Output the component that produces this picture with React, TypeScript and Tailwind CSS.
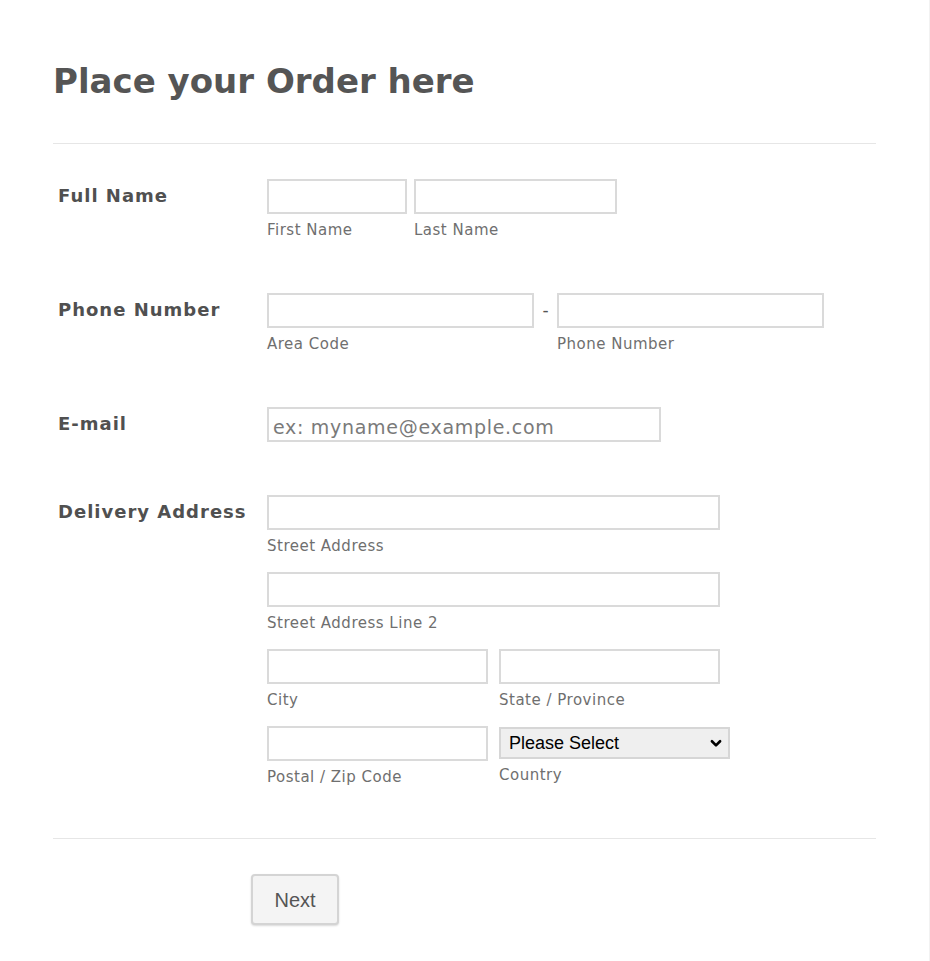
const Field = ({ w, sub, h = "h-[35px]", placeholder }: { w: string; sub?: string; h?: string; placeholder?: string }) => {
  return (
    <div className={`flex flex-col ${w}`}>
      <input
        className={`${h} w-full border-2 border-[#dadada] bg-white px-[4px] pt-[4px] text-[19px] tracking-[0.7px] text-[#555] outline-none placeholder:text-[#7a7a7a]`}
        placeholder={placeholder}
      />
      {sub && <span className="mt-[6px] text-[15px] leading-[21px] tracking-[0.5px] text-[#6f6f6f]">{sub}</span>}
    </div>
  )
}

const Label = ({ children }: { children: string }) => {
  return (
    <div className="w-[214px] shrink-0 pl-[5px] pt-[5px] text-[18px] font-bold leading-[24px] tracking-[1px] text-[#505050]">{children}</div>
  )
}

export default function App() {
  return (
    <div className="min-h-screen w-[930px] border-r border-[#f2f2f2] bg-white font-['DejaVu_Sans',sans-serif]">
      <div className="px-[53px] pt-[59px]">
        {/* title */}
        <h1 className="text-[34px] font-bold leading-[44px] text-[#555]">Place your Order here</h1>
        <div className="mt-[40px] border-t border-[#e6e6e6]"></div>

        {/* full name */}
        <div className="mt-[35px] flex">
          <Label>Full Name</Label>
          <div className="flex gap-[7px]">
            <Field w="w-[140px]" sub="First Name" />
            <Field w="w-[203px]" sub="Last Name" />
          </div>
        </div>

        {/* phone */}
        <div className="mt-[52px] flex">
          <Label>Phone Number</Label>
          <div className="flex">
            <Field w="w-[267px]" sub="Area Code" />
            <span className="w-[23px] pt-[5px] text-center text-[17px] leading-[24px] text-[#555]">-</span>
            <Field w="w-[267px]" sub="Phone Number" />
          </div>
        </div>

        {/* email */}
        <div className="mt-[52px] flex">
          <Label>E-mail</Label>
          <Field w="w-[394px]" placeholder="ex: myname@example.com" />
        </div>

        {/* address */}
        <div className="mt-[53px] flex">
          <Label>Delivery Address</Label>
          <div className="flex flex-col gap-[15px]">
            <Field w="w-[453px]" sub="Street Address" />
            <Field w="w-[453px]" sub="Street Address Line 2" />
            <div className="flex gap-[11px]">
              <Field w="w-[221px]" sub="City" />
              <Field w="w-[221px]" sub="State / Province" />
            </div>
            <div className="flex gap-[11px]">
              <Field w="w-[221px]" sub="Postal / Zip Code" />
              <div className="flex w-[231px] flex-col pt-[1px]">
                <div className="flex h-[32px] items-center justify-between border-2 border-[#d6d6d6] bg-[#efefef] pl-[8px] pr-[5px] font-['Liberation_Sans',sans-serif] text-[18px] text-black">
                  <span>Please Select</span>
                  <svg className="h-[14px] w-[14px]" viewBox="0 0 24 24" fill="none" stroke="currentColor" strokeWidth="4.5" strokeLinecap="round" strokeLinejoin="round">
                    <path d="M5 9l7 7 7-7" />
                  </svg>
                </div>
                <span className="mt-[6px] text-[15px] leading-[21px] tracking-[0.5px] text-[#6f6f6f]">Country</span>
              </div>
            </div>
          </div>
        </div>

        <div className="mt-[50px] border-t border-[#e6e6e6]"></div>

        {/* next */}
        <div className="pl-[198px] pt-[35px]">
          <button className="h-[51px] w-[88px] rounded-[4px] border-2 border-[#d4d4d4] bg-[#f4f4f4] font-['Liberation_Sans',sans-serif] text-[20px] text-[#555] shadow-[0_1px_2px_rgba(0,0,0,0.15)]">
            Next
          </button>
        </div>
      </div>
    </div>
  )
}
